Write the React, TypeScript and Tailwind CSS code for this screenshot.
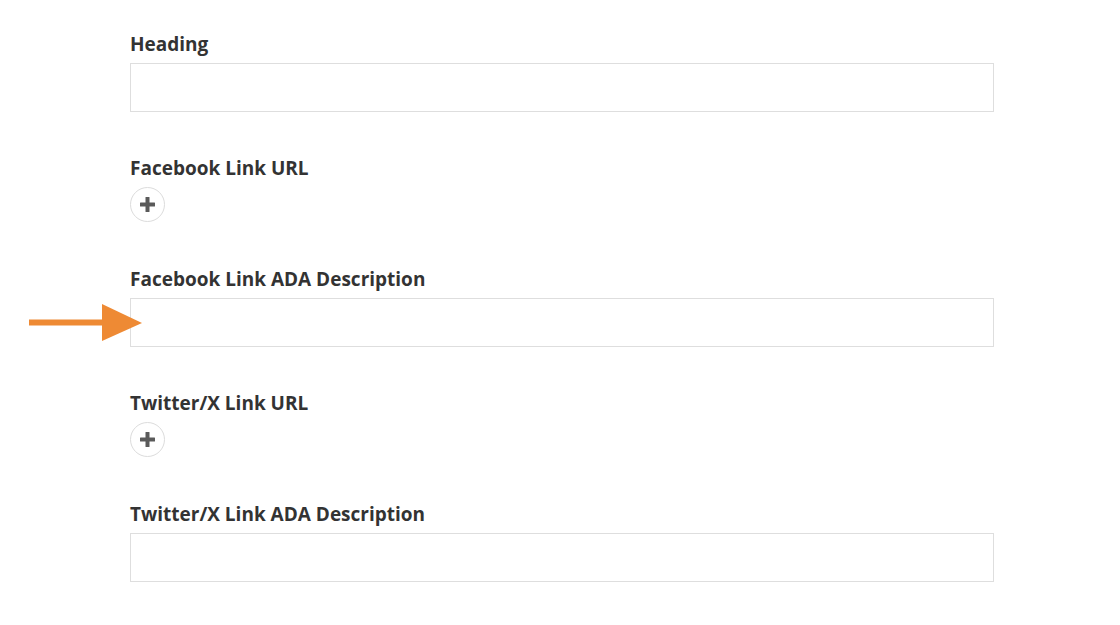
import React from 'react';

const PlusButton: React.FC = () => (
  <button
    type="button"
    className="mt-[1px] mb-[1px] w-[35px] h-[35px] rounded-full border border-[#dcdcdc] bg-white flex items-center justify-center"
  >
    <svg width="15" height="15" viewBox="0 0 15 15">
      <rect x="5.5" y="0" width="4" height="15" rx="0.5" fill="#5a5a5a" />
      <rect x="0" y="5.5" width="15" height="4" rx="0.5" fill="#5a5a5a" />
    </svg>
  </button>
);

const Field: React.FC<{ label: string; kind: 'input' | 'add' }> = ({ label, kind }) => (
  <div>
    <label className="block pt-[2px] text-[19px] leading-[27px] font-bold text-[#333333] mb-[5px]">{label}</label>
    {kind === 'input' ? (
      <input type="text" className="block w-[864px] h-[49px] border border-[#dedede] bg-white outline-none" />
    ) : (
      <PlusButton />
    )}
  </div>
);

const App: React.FC = () => {
  return (
    <div
      className="relative w-[1120px] h-[625px] bg-white overflow-hidden"
      style={{ fontFamily: '"Open Sans", "Liberation Sans", sans-serif' }}
    >
      <div className="pl-[130px] pt-[29px] flex flex-col gap-[41px]">
        <Field label="Heading" kind="input" />
        <Field label="Facebook Link URL" kind="add" />
        <Field label="Facebook Link ADA Description" kind="input" />
        <Field label="Twitter/X Link URL" kind="add" />
        <Field label="Twitter/X Link ADA Description" kind="input" />
      </div>

      {/* orange pointer arrow */}
      <svg className="absolute left-[29px] top-[304px]" width="116" height="38" viewBox="0 0 116 38">
        <rect x="0" y="15.5" width="76" height="6" fill="#ee8a34" />
        <polygon points="73,0 113,19 73,37" fill="#ee8a34" />
      </svg>
    </div>
  );
};

export default App;
